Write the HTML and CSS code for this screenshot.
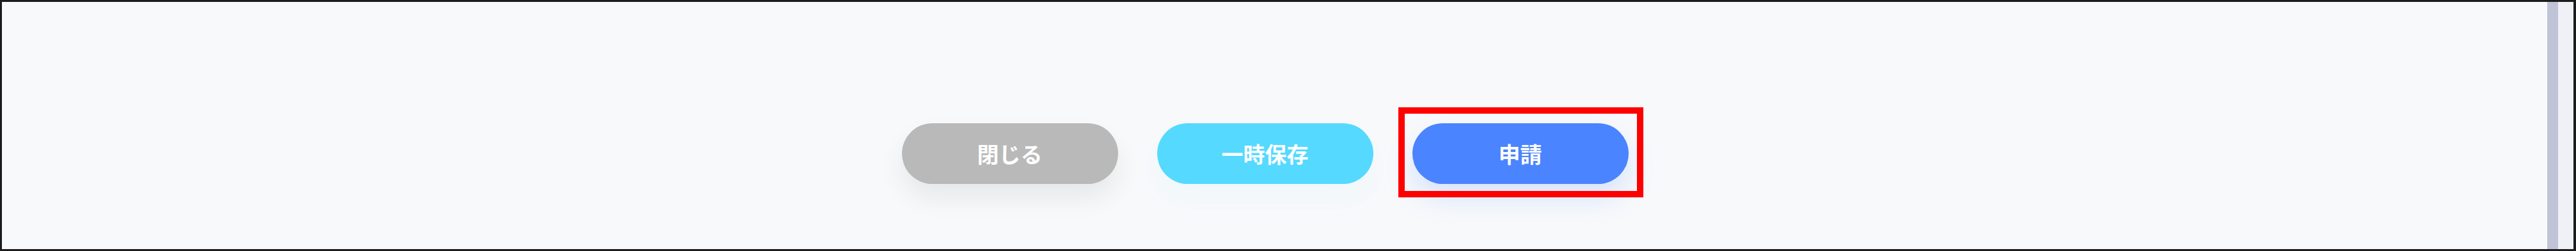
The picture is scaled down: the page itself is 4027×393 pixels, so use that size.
FILE: index.html
```html
<!DOCTYPE html>
<html lang="ja">
<head>
<meta charset="utf-8">
<title>申請</title>
<link rel="stylesheet" href="styles.css">
</head>
<body>
<div class="frame">
  <div class="content">
    <div class="actions">
      <button class="btn btn-close" type="button">閉じる</button>
      <button class="btn btn-save" type="button">一時保存</button>
      <div class="highlight-wrap">
        <button class="btn btn-apply" type="button">申請</button>
        <span class="highlight"></span>
      </div>
    </div>
  </div>
  <div class="scrollbar">
    <div class="thumb"></div>
    <div class="track"></div>
  </div>
</div>
</body>
</html>
```
FILE: styles.css
```css
html, body {
  margin: 0;
  padding: 0;
  background: #f8f9fb;
}
.frame {
  box-sizing: border-box;
  width: 4027px;
  height: 393px;
  border: 3px solid #1c1c1c;
  border-right-width: 4px;
  display: flex;
  overflow: hidden;
}
.content {
  flex: 1;
  background: #f8f9fb;
  padding: 190px 30px 0 0;
  box-sizing: border-box;
}
.actions {
  display: flex;
  justify-content: center;
  gap: 61px;
}
.btn {
  box-sizing: border-box;
  width: 338px;
  height: 95px;
  border: none;
  border-radius: 48px;
  color: #ffffff;
  font-family: "Noto Sans CJK JP", "Noto Sans", sans-serif;
  font-weight: 700;
  font-size: 34px;
  letter-spacing: 0;
  padding: 0;
  display: flex;
  align-items: center;
  justify-content: center;
}
.btn-close {
  background: #b9b9b9;
  box-shadow: 0 22px 40px rgba(0, 0, 0, 0.07);
}
.btn-save {
  background: #55d9ff;
  box-shadow: 0 22px 40px rgba(85, 217, 255, 0.05);
}
.btn-apply {
  background: #4a84ff;
  box-shadow: 0 22px 44px rgba(74, 132, 255, 0.18);
}
.highlight-wrap {
  position: relative;
}
.highlight {
  position: absolute;
  left: -22px;
  top: -25px;
  right: -23px;
  bottom: -21px;
  border: 10px solid #ff0000;
  pointer-events: none;
}
.scrollbar {
  display: flex;
  width: 41px;
  flex: none;
}
.thumb {
  width: 17px;
  background: #c1c4d7;
}
.track {
  flex: 1;
  background: #eff1f7;
}
```
